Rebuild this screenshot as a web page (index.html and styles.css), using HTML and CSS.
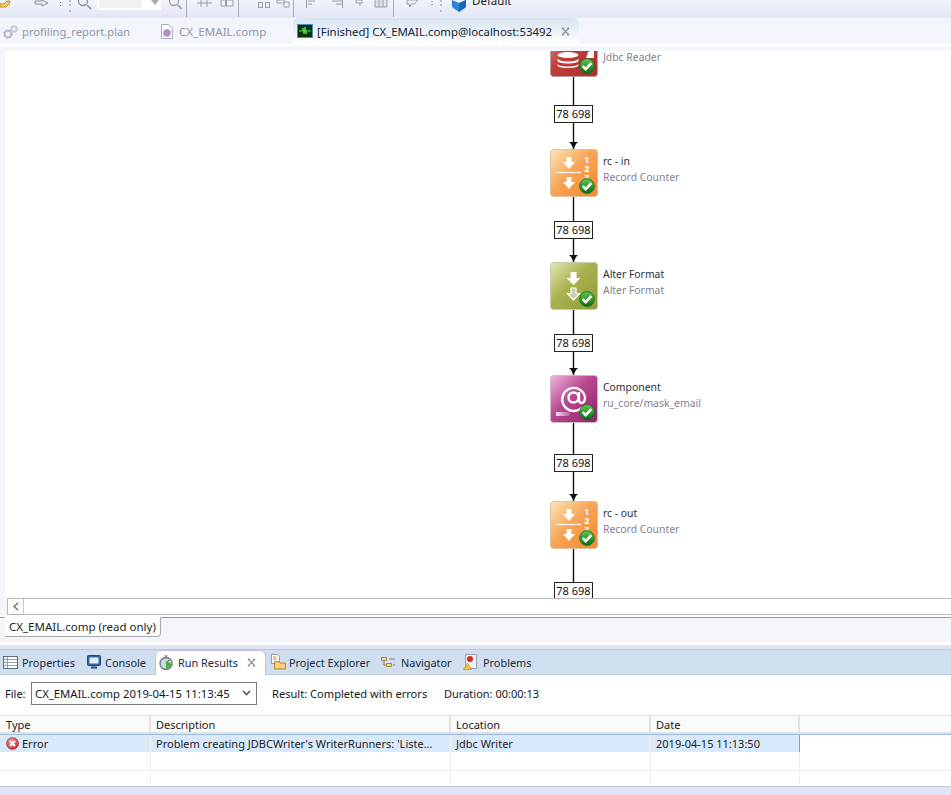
FILE: index.html
```html
<!DOCTYPE html>
<html lang="en">
<head>
<meta charset="utf-8">
<title>CX_EMAIL.comp</title>
<link rel="stylesheet" href="styles.css">
</head>
<body>
<svg class="defs" width="0" height="0" aria-hidden="true">
  <defs>
    <linearGradient id="gOrange" x1="0" y1="0" x2="1" y2="1"><stop offset="0" stop-color="#fde6bc"/><stop offset=".45" stop-color="#f9a658"/><stop offset="1" stop-color="#f6862c"/></linearGradient>
    <linearGradient id="gOlive" x1="0" y1="0" x2="1" y2="1"><stop offset="0" stop-color="#e4e7b4"/><stop offset=".45" stop-color="#a9b24e"/><stop offset="1" stop-color="#8f9a35"/></linearGradient>
    <linearGradient id="gPink" x1="0" y1="0" x2="1" y2="1"><stop offset="0" stop-color="#efb6dc"/><stop offset=".45" stop-color="#b8478f"/><stop offset="1" stop-color="#8e2469"/></linearGradient>
    <linearGradient id="gRed" x1="0" y1="0" x2="1" y2="1"><stop offset="0" stop-color="#e58a86"/><stop offset=".45" stop-color="#c23c38"/><stop offset="1" stop-color="#a8302e"/></linearGradient>
    <linearGradient id="gCheck" x1="0" y1="0" x2="0" y2="1"><stop offset="0" stop-color="#62c850"/><stop offset="1" stop-color="#0a6e1a"/></linearGradient>
    <radialGradient id="gErr" cx=".4" cy=".3" r=".8"><stop offset="0" stop-color="#f59a9a"/><stop offset="1" stop-color="#c41f2c"/></radialGradient>
    <symbol id="check" viewBox="0 0 16 16"><circle cx="8" cy="8" r="7.400" fill="url(#gCheck)" stroke="#0b5e18" stroke-width=".7"/><path d="M3.800 8.200l2.900 3L12.300 5.200" fill="none" stroke="#fff" stroke-width="2.500"/></symbol>
    <symbol id="down" viewBox="0 0 12 12"><path d="M3.500 0h5v5H12l-6 7-6-7h3.500z" fill="#fff"/></symbol>
    <symbol id="counter" viewBox="0 0 48 48">
      <rect x=".5" y=".5" width="47" height="47" rx="3" fill="url(#gOrange)" stroke="#d8c4a4"/>
      <use href="#down" x="13" y="8" width="12" height="12"/>
      <path d="M6 23.500h25" stroke="#fff" stroke-width="1.200"/>
      <use href="#down" x="13" y="28" width="12" height="12"/>
      <text class="digits" x="34" y="14">1</text><text class="digits" x="34" y="23">2</text><text class="digits" x="34" y="32">3</text>
      <use href="#check" x="29" y="29" width="16" height="16"/>
    </symbol>
  </defs>
</svg>

<header class="toolbar">
  <svg class="strip strip-a" width="97" height="17" viewBox="0 0 97 17" fill="none">
    <path d="M0 4h4l3-3 3 0-1 3-3 3H0z" fill="#f8d070" stroke="#c88a20"/>
    <path d="M35 1h7v-1l6 3-6 3V4h-7z" fill="#eef0f8" stroke="#8a8f9c"/>
    <path d="M60 2.500h1M60 5.500h1" stroke="#777"/>
    <path d="M70 0v8M70 10v3" stroke="#8b8b8b" stroke-dasharray="2 2"/>
    <circle cx="83" cy="1" r="4.500" stroke="#8a8f9c" stroke-width="1.300"/>
    <path d="M87 5l4 4" stroke="#8a8f9c" stroke-width="1.600"/>
  </svg>
  <div class="zoombox"><span class="zoomfield"></span><svg width="8" height="5" viewBox="0 0 8 5"><path d="M0 0h8L4 5z" fill="#a8a8a8"/></svg></div>
  <svg class="strip strip-b" width="290" height="17" viewBox="0 0 290 17" fill="none" stroke="#9a9eaa">
    <circle cx="13" cy="1" r="4.500" stroke-width="1.300"/><path d="M17 5l3.500 4" stroke-width="1.600"/>
    <path d="M25.500 0v17" stroke="#a8abb5"/>
    <path d="M40 0v7M46 0v7M36 3h15"/>
    <path d="M60 0h12v6H60z" fill="#f3f4fa"/><path d="M65 0v6" stroke-width="2"/>
    <path d="M77.500 0v17" stroke="#a8abb5"/>
    <rect x="97.500" y="2.500" width="4" height="5"/><rect x="104.500" y="2.500" width="4" height="5"/>
    <path d="M116 0h7v3h-7zM123 2h5v5h-5z" fill="#f3f4fa"/>
    <path d="M132.500 0v17" stroke="#a8abb5"/>
    <path d="M145.500 0v8M147 1h7M147 4h4"/>
    <path d="M181.500 0v8M171 1h10M175 4h6"/>
    <path d="M195 0h6v3h-6zM199 3v3"/>
    <path d="M214 0v7h12V0M218 0v7M222 0v7" fill="#dfe2ea"/>
    <path d="M232.500 0v17" stroke="#a8abb5"/>
    <path d="M246 0h11l-4 4h-3l-1 3-1-3h-2z" fill="#eef0f8"/>
    <path d="M271 1v1M271 4v1" stroke="#777"/>
    <path d="M280 0v8M280 10v3" stroke="#8b8b8b" stroke-dasharray="2 2"/>
  </svg>
  <svg class="cube" width="14" height="12" viewBox="0 0 14 12"><path d="M0 0l7 3 7-3v7l-7 5-7-5z" fill="#2a86d8"/><path d="M7 3l7-3v7l-7 5z" fill="#1668b4"/></svg>
  <span class="perspective">Default</span>
</header>

<nav class="editor-tabs">
  <div class="etab etab-plan">
    <svg width="15" height="15" viewBox="0 0 15 15" fill="none"><circle cx="5" cy="10" r="3.200" stroke="#b9bccf" stroke-width="2"/><circle cx="5" cy="10" r="4.300" stroke="#b9bccf" stroke-width="1.200" stroke-dasharray="2 1.400"/><circle cx="11" cy="5" r="2.600" stroke="#c6c8d9" stroke-width="1.800"/><circle cx="11" cy="5" r="3.600" stroke="#c6c8d9" stroke-width="1" stroke-dasharray="1.800 1.200"/></svg>
    <span>profiling_report.plan</span>
  </div>
  <div class="etab etab-comp">
    <svg width="12" height="15" viewBox="0 0 12 15"><path d="M.5.5h7l4 4v10H.5z" fill="#fff" stroke="#a9afc4"/><circle cx="6" cy="9" r="3.800" fill="#b48cc4"/></svg>
    <span>CX_EMAIL.comp</span>
  </div>
  <div class="etab etab-active">
    <svg width="16" height="14" viewBox="0 0 16 14"><rect x=".5" y=".5" width="15" height="13" fill="#06320c" stroke="#4a8fc0"/><path d="M2 7h3l1-3 1 6 1-7 1 7 1-4 1 1h3" fill="none" stroke="#4fe04f"/></svg>
    <span>[Finished] CX_EMAIL.comp@localhost:53492</span>
    <svg class="close" width="9" height="9" viewBox="0 0 9 9"><path d="M1 1l7 7M8 1L1 8M1 1h2M6 1h2M1 8h2M6 8h2" fill="none" stroke="#8b8f98" stroke-width="1.200"/></svg>
  </div>
</nav>
<div class="tab-rule"></div>

<section class="editor">
  <div class="canvas">
    <svg class="edges" width="946" height="547" viewBox="0 0 946 547" fill="#111">
      <path d="M568.500 26v72M568.500 146v65M568.500 259v65M568.500 372v78M568.500 498v50" fill="none" stroke="#111" stroke-width="1.400"/>
      <path d="M564 91h9l-2 2-2.500 5-2.500-5zM564 204h9l-2 2-2.500 5-2.500-5zM564 317h9l-2 2-2.500 5-2.500-5zM564 443h9l-2 2-2.500 5-2.500-5z"/>
    </svg>

    <div class="node n-reader">
      <svg class="ico" width="48" height="48" viewBox="0 0 48 48">
        <rect x=".5" y=".5" width="47" height="47" rx="3" fill="url(#gRed)" stroke="#b9a0a0"/>
        <ellipse cx="18" cy="26" rx="10.500" ry="3" fill="#fff"/>
        <path d="M7.500 29c0 2 4 3.500 10.500 3.500S28.500 31 28.500 29v2.500c0 2-4 3-10.500 3s-10.500-1-10.500-3zM7.500 34.500c0 2 4 3 10.500 3s10.500-1 10.500-3V36c0 2-4 3-10.500 3S7.500 38 7.500 36z" fill="#fff"/>
        <path d="M38 23l6-3v9h-8z" fill="#fff"/>
        <use href="#check" x="29" y="29" width="16" height="16"/>
      </svg>
      <div class="label"><b>Jdbc Reader</b><i>Jdbc Reader</i></div>
    </div>

    <div class="node n-in">
      <svg class="ico" width="48" height="48"><use href="#counter" width="48" height="48"/></svg>
      <div class="label"><b>rc - in</b><i>Record Counter</i></div>
    </div>

    <div class="node n-alter">
      <svg class="ico" width="48" height="48" viewBox="0 0 48 48">
        <rect x=".5" y=".5" width="47" height="47" rx="3" fill="url(#gOlive)" stroke="#c8ccae"/>
        <path d="M20.500 10h6v6h4l-7 7-7-7h4z" fill="#fff"/>
        <path d="M21 26h5v5.500h3.500l-6 6.500-6-6.500H21z" fill="#c9cdb0" stroke="#fff" stroke-width="1.200"/>
        <use href="#check" x="29" y="29" width="16" height="16"/>
      </svg>
      <div class="label"><b>Alter Format</b><i>Alter Format</i></div>
    </div>

    <div class="node n-comp">
      <svg class="ico" width="48" height="48" viewBox="0 0 48 48">
        <defs><linearGradient id="gBar" x1="0" x2="1" y1="0" y2="0"><stop offset="0" stop-color="#f5e0ee"/><stop offset="1" stop-color="#b75d9a"/></linearGradient></defs>
        <rect x=".5" y=".5" width="47" height="47" rx="3" fill="url(#gPink)" stroke="#cdb8c8"/>
        <path d="M32 32.500A11.500 11.500 0 1 1 35 22c0 4-1.500 6-3.500 6S29 26 29 24v-7" fill="none" stroke="#fff" stroke-width="2.400"/>
        <circle cx="23.500" cy="22.500" r="5" fill="none" stroke="#fff" stroke-width="2.400"/>
        <rect x="6" y="37" width="14" height="4" fill="url(#gBar)"/>
        <use href="#check" x="29" y="29" width="16" height="16"/>
      </svg>
      <div class="label"><b>Component</b><i>ru_core/mask_email</i></div>
    </div>

    <div class="node n-out">
      <svg class="ico" width="48" height="48"><use href="#counter" width="48" height="48"/></svg>
      <div class="label"><b>rc - out</b><i>Record Counter</i></div>
    </div>

    <span class="count c1">78 698</span>
    <span class="count c2">78 698</span>
    <span class="count c3">78 698</span>
    <span class="count c4">78 698</span>
    <span class="count c5">78 698</span>
  </div>

  <div class="hscroll">
    <span class="scroll-btn"><svg width="6" height="9" viewBox="0 0 6 9"><path d="M5 1L1 4.500 5 8" fill="none" stroke="#666" stroke-width="1.200"/></svg></span>
  </div>
  <div class="page-tabs"><span class="page-tab">CX_EMAIL.comp (read only)</span></div>
</section>

<div class="sash"></div>

<section class="views">
  <nav class="view-tabs">
    <div class="vtab v-props">
      <svg width="15" height="13" viewBox="0 0 15 13"><rect x=".5" y=".5" width="14" height="12" fill="#fff" stroke="#5a6d80"/><path d="M1 3.500h13M1 6.500h13M1 9.500h13M4.500 1v11" stroke="#8fa0b0"/></svg>
      <span>Properties</span>
    </div>
    <div class="vtab v-console">
      <svg width="14" height="14" viewBox="0 0 14 14"><rect x=".5" y=".5" width="13" height="10" rx="1" fill="#2f6aa8" stroke="#1d4a80"/><rect x="2.500" y="2.500" width="9" height="6" fill="#e6f0fa"/><path d="M4 12.500h6" stroke="#1d4a80" stroke-width="2"/></svg>
      <span>Console</span>
    </div>
    <div class="vtab v-results">
      <svg width="15" height="15" viewBox="0 0 15 15"><circle cx="7" cy="8.500" r="6" fill="#d3dae2" stroke="#6d7782" stroke-width="1.300"/><path d="M5.500 1h3M7 8.500l3-3.500" stroke="#555"/><path d="M7 5.500v9l7-4.500z" fill="#48b048"/></svg>
      <span>Run Results</span>
      <svg class="close" width="9" height="9" viewBox="0 0 9 9"><path d="M1 1l7 7M8 1L1 8M1 1h2M6 1h2M1 8h2M6 8h2" fill="none" stroke="#8b8f98" stroke-width="1.200"/></svg>
    </div>
    <div class="vtab v-project">
      <svg width="16" height="16" viewBox="0 0 16 16"><path d="M1.500.5h6l2 2v7h-8z" fill="#fff" stroke="#9a9a9a"/><path d="M3 3h3M3 5h4" stroke="#c08a50"/><path d="M4.500 7.500h4l1.500 1.500h5.500v6h-11z" fill="#f8cf78" stroke="#b8862c"/></svg>
      <span>Project Explorer</span>
    </div>
    <div class="vtab v-nav">
      <svg width="15" height="13" viewBox="0 0 15 13"><path d="M.5 1.500h5v3h-5zM5.500 7.500h5v3h-5z" fill="#f5d88c" stroke="#a88a38"/><path d="M3 5v4h2M8 3h6M12 9h2" stroke="#6b7c8a" fill="none"/></svg>
      <span>Navigator</span>
    </div>
    <div class="vtab v-problems">
      <svg width="15" height="16" viewBox="0 0 15 16"><path d="M2.500.5h11v14h-11z" fill="#eef1f6" stroke="#9aa2b0"/><circle cx="7" cy="5" r="3" fill="#d82828"/><path d="M4.500 9l4 6.500h-8z" fill="#f2c230" stroke="#a88a20" stroke-width=".6"/></svg>
      <span>Problems</span>
    </div>
  </nav>

  <div class="file-row">
    <span class="file-label">File:</span>
    <div class="file-select">
      <span>CX_EMAIL.comp 2019-04-15 11:13:45</span>
      <svg width="9" height="6" viewBox="0 0 9 6"><path d="M1 1l3.500 3.500L8 1" fill="none" stroke="#555" stroke-width="1.600"/></svg>
    </div>
    <span class="result">Result: Completed with errors</span>
    <span class="duration">Duration: 00:00:13</span>
  </div>

  <div class="table">
    <div class="row head"><div>Type</div><div>Description</div><div>Location</div><div>Date</div><div class="rest"></div></div>
    <div class="row selected">
      <div class="type-cell">
        <svg width="13" height="13" viewBox="0 0 13 13"><circle cx="6.500" cy="6.500" r="6" fill="url(#gErr)" stroke="#a81c28" stroke-width=".6"/><path d="M4 4l5 5M9 4l-5 5" stroke="#fff" stroke-width="2"/></svg>
        Error
      </div>
      <div>Problem creating JDBCWriter's WriterRunners: 'Liste...</div>
      <div>Jdbc Writer</div>
      <div>2019-04-15 11:13:50</div>
      <div class="rest"></div>
    </div>
    <div class="row blank"><div></div><div></div><div></div><div></div><div class="rest"></div></div>
    <div class="row blank last"><div></div><div></div><div></div><div></div><div class="rest"></div></div>
  </div>
</section>
<div class="statusbar"></div>
</body>
</html>
```
FILE: styles.css
```css
* { box-sizing: border-box; }
html, body { margin: 0; height: 100%; }
body {
  width: 951px;
  height: 795px;
  overflow: hidden;
  display: flex;
  flex-direction: column;
  background: #f4f6fc;
  font-family: "Noto Sans", "Open Sans", sans-serif;
  font-size: 11px;
  color: #1c1c1c;
}
.defs { position: absolute; }
svg { display: block; flex: none; }

/* top toolbar, cropped by the top of the shot */
.toolbar {
  height: 17px;
  flex: none;
  display: flex;
  align-items: flex-start;
  overflow: hidden;
  background: linear-gradient(#f2f3fa, #e2e6f5);
}
.zoombox {
  width: 64px;
  height: 10px;
  background: #fff;
  display: flex;
  padding-left: 2px;
}
.zoomfield { width: 43px; height: 8px; background: #f0f0f0; }
.zoombox svg { margin: 0 0 0 9px; }
.cube { margin-left: 1px; }
.perspective { margin: -6px 0 0 6px; font-size: 11.500px; line-height: 14px; }

/* editor tabs */
.editor-tabs {
  height: 27px;
  flex: none;
  display: flex;
  background: #f3f5fc;
  border-top: 1px solid #e6e9f6;
}
.etab { display: flex; align-items: center; color: #9097a6; font-size: 11.600px; white-space: nowrap; }
.etab-plan { width: 161px; padding-left: 3px; gap: 4px; font-size: 11.200px; }
.etab-comp { width: 132px; gap: 6px; }
.etab-active {
  width: 286px;
  padding-left: 4px;
  gap: 4px;
  color: #14233c;
  font-size: 11.400px;
  background: linear-gradient(#d7e4f0, #f2f6fb 70%, #fff);
  border-radius: 6px 6px 0 0;
}
.etab-active .close { margin-left: 5px; }
.tab-rule { height: 2px; flex: none; background: #fff; }

/* graph editor */
.editor { flex: none; padding-top: 5px; background: #f4f6fc; }
.canvas {
  position: relative;
  height: 547px;
  margin-left: 5px;
  overflow: hidden;
  background: #fff;
}
.edges { position: absolute; left: 0; top: 0; }
.node { position: absolute; left: 545px; display: flex; gap: 5px; }
.n-reader { top: -22px; }
.n-in { top: 98px; }
.n-alter { top: 211px; }
.n-comp { top: 324px; }
.n-out { top: 450px; }
.label { display: flex; flex-direction: column; padding-top: 4px; white-space: nowrap; }
.label b { font-weight: 400; height: 16px; line-height: 16px; font-size: 10.400px; color: #2a2e3e; }
.label i { font-style: normal; height: 16px; line-height: 16px; font-size: 10.400px; color: #7d7f8e; }
.digits { font: 700 9.500px "Noto Sans", sans-serif; fill: #fff; }

.count {
  position: absolute;
  left: 549px;
  width: 39px;
  height: 18px;
  border: 1px solid #222;
  background: #fff;
  color: #111;
  font-size: 11px;
  line-height: 16px;
  text-align: center;
  white-space: nowrap;
}
.c1 { top: 54px; }
.c2 { top: 170px; }
.c3 { top: 283px; }
.c4 { top: 403px; }
.c5 { top: 531px; }

.hscroll {
  height: 17px;
  margin-left: 7px;
  background: #fff;
  border-top: 1px solid #b8b8b8;
  border-bottom: 1px solid #b8b8b8;
  border-left: 1px solid #b8b8b8;
  display: flex;
}
.scroll-btn {
  width: 16px;
  background: #fdfdfd;
  border-right: 1px solid #c8c8c8;
  display: flex;
  align-items: center;
  justify-content: center;
}
.page-tabs {
  height: 27px;
  padding-left: 5px;
  border-top: 2px solid #fff;
  background: linear-gradient(#9a9a9a 1px, #f3f5fb 1px);
}
.page-tab {
  display: block;
  width: 156px;
  height: 20px;
  padding-left: 4px;
  background: #fff;
  border: 1px solid #a8a8a8;
  border-top: 1px solid #fff;
  border-left: 0;
  border-radius: 0 0 4px 0;
  line-height: 18px;
  font-size: 11.500px;
  white-space: nowrap;
}

.sash {
  flex: none;
  height: 7px;
  border-top: 3px solid #fff;
  background: #e0e4f4;
}

/* bottom views */
.views { flex: none; height: 138px; background: #fff; border-bottom: 1px solid #c4c8d4; }
.view-tabs {
  height: 26px;
  display: flex;
  background: #d0dfef;
  border-top: 1px solid #c0c5d0;
  border-bottom: 1px solid #bcc4d6;
}
.vtab { display: flex; align-items: center; white-space: nowrap; font-size: 10.900px; color: #20283a; gap: 5px; }
.v-props { width: 84px; padding-left: 3px; gap: 4px; }
.v-console { width: 68px; gap: 4px; margin-left: 3px; }
.v-results {
  width: 111px;
  height: 25px;
  padding: 0 0 2px 3px;
  background: #fff;
  border: 1px solid #bcc4d6;
  border-bottom: 0;
  border-radius: 6px 6px 0 0;
  margin-right: 4px;
  gap: 4px;
}
.v-results .close { margin-left: 5px; }
.v-project { width: 111px; gap: 3px; }
.v-nav { width: 82px; }
.v-problems { width: 80px; }

.file-row {
  height: 40px;
  display: flex;
  align-items: center;
  padding: 0 0 4px 5px;
  color: #14161c;
  white-space: nowrap;
}
.file-label { width: 26px; }
.file-select {
  width: 226px;
  height: 23px;
  border: 1px solid #7a7a7a;
  padding: 0 5px 0 3px;
  display: flex;
  align-items: center;
  justify-content: space-between;
  font-size: 11.300px;
}
.result { margin-left: 15px; width: 158px; font-size: 11.100px; }
.duration { margin-left: 14px; }

.table { color: #1c1c1c; }
.row {
  display: grid;
  grid-template-columns: 151px 300px 200px 149px 1fr;
  height: 19px;
  white-space: nowrap;
}
.row > div { padding-left: 5px; line-height: 18px; border-right: 1px solid #efefef; overflow: hidden; }
.row > div:first-child { padding-left: 6px; }
.row > .rest { border-right: 0; }
.head { height: 19px; background: #fafafa; border-top: 1px solid #e2e2e2; border-bottom: 2px solid #e2e2e2; }
.head > div { border-right: 2px solid #e2e2e2; line-height: 17px; }
.selected { background: #d9e9fc; height: 18px; border-top: 1px solid #9dbce4; }
.selected > div { line-height: 17px; }
.selected > .rest { background: #fff; }
.selected > div:nth-child(4) { border-right: 1px solid #7da2d6; }
.blank { border-bottom: 1px solid #efefef; }
.blank.last { height: 13px; border-bottom: 0; }
.type-cell { display: flex; align-items: center; gap: 3px; }
.statusbar { flex: 1; background: #e0e5f5; }
```
